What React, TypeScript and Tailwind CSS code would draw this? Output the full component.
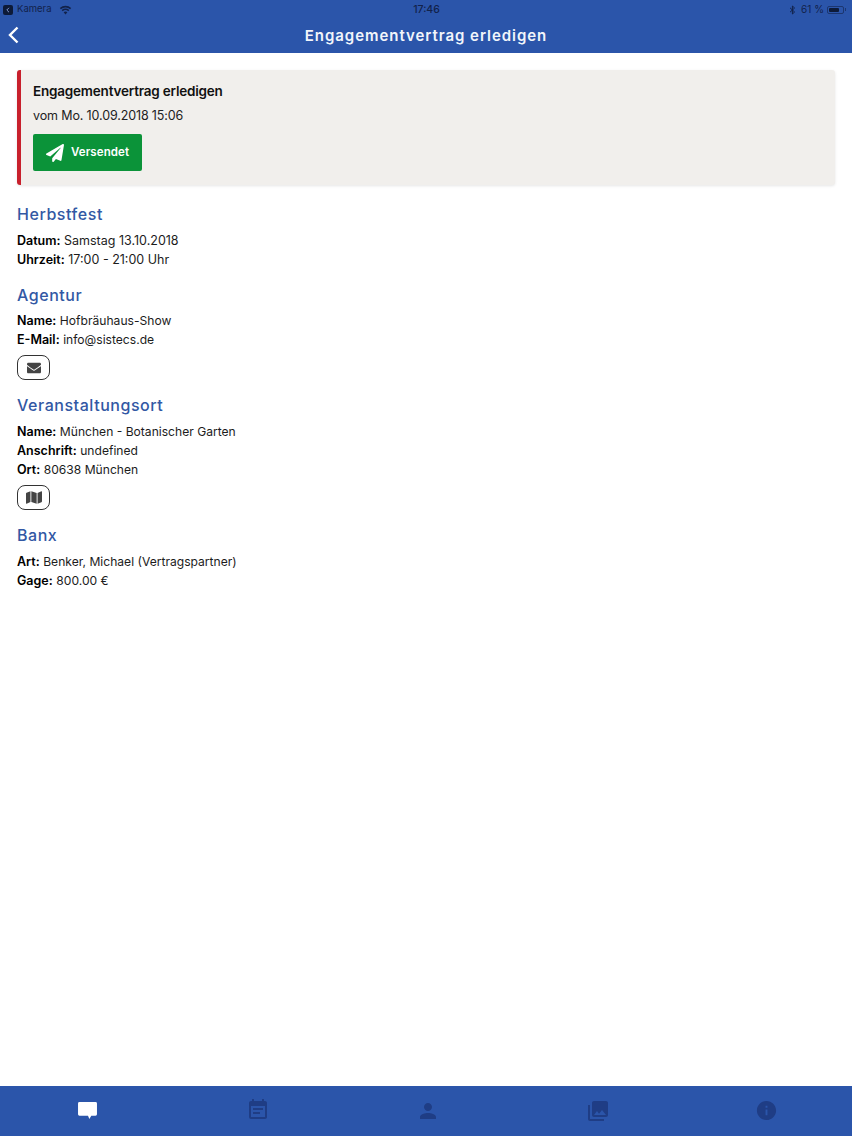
import React from 'react';
import { FaEnvelope, FaMap, FaPaperPlane } from 'react-icons/fa';
import { MdEventNote, MdInfo, MdPerson, MdPhotoLibrary } from 'react-icons/md';

const Row = ({ label, value, large }: { label: string; value: string; large?: boolean }) => (
  <p className="h-[19px] text-[12.5px] leading-[19px] text-[#1c1c1c]">
    <b className="font-semibold text-black">{label}</b>{' '}
    <span className={large ? 'text-[12.5px]' : 'text-[12.1px]'}>{value}</span>
  </p>
);

const SectionTitle = ({ children }: { children: React.ReactNode }) => (
  <h2 className="h-[24px] text-[16px] leading-[24px] font-medium tracking-[0.55px] text-[#3258a4]">{children}</h2>
);

const IconButton = ({ children }: { children: React.ReactNode }) => (
  <div className="mt-[6px] flex h-[25px] w-[33px] items-center justify-center rounded-[8px] border border-[#333] bg-white text-[#444]">
    {children}
  </div>
);

const App = () => {
  return (
    <div className="flex h-[1136px] w-[852px] flex-col overflow-hidden bg-white font-['Inter',sans-serif]">
      {/* Status bar + Titel */}
      <header className="h-[53px] shrink-0 bg-[#2b55aa]">
        <div className="flex h-[19px] items-center justify-between px-[3px] text-[9.5px] text-[#12224a]">
          <div className="flex flex-1 items-center gap-[4px]">
            <span className="flex h-[10px] w-[10px] items-center justify-center rounded-[2px] bg-[#0d1a38]">
              <svg width="6" height="6" viewBox="0 0 6 6" fill="none" stroke="#7d93c8" strokeWidth="1">
                <path d="M4 0.8 L1.8 3 L4 5.2" />
              </svg>
            </span>
            <span>Kamera</span>
            <svg className="ml-[3px]" width="13" height="10" viewBox="0 0 13 10" fill="#12224a">
              <path d="M6.5 9.5 L4.6 7.3 A3 3 0 0 1 8.4 7.3 Z" />
              <path d="M3.7 6.2 L2.7 5.1 A5.6 5.6 0 0 1 10.3 5.1 L9.3 6.2 A4.2 4.2 0 0 0 3.7 6.2 Z" />
              <path d="M1.9 4.2 L0.8 3 A8.3 8.3 0 0 1 12.2 3 L11.1 4.2 A6.8 6.8 0 0 0 1.9 4.2 Z" />
            </svg>
          </div>
          <span className="ml-[4px] text-[10.5px] font-medium">17:46</span>
          <div className="flex flex-1 items-center justify-end gap-[3px] pr-[3px]">
            <svg width="7" height="10" viewBox="0 0 7 10" fill="none" stroke="#12224a" strokeWidth="1">
              <path d="M1 2.8 L5.6 7 L3.4 9 V1 L5.6 3 L1 7.2" />
            </svg>
            <span className="ml-[2px] text-[10px]">61 %</span>
            <span className="flex h-[8px] w-[17px] rounded-[2px] border border-[#12224a]/60 p-px">
              <span className="w-[10px] rounded-[1px] bg-[#0d1a38]" />
            </span>
            <span className="-ml-[2px] h-[3px] w-px bg-[#12224a]/60" />
          </div>
        </div>
        <div className="relative flex h-[34px] items-center justify-center">
          <svg className="absolute left-[8px] top-[7px]" width="11" height="18" viewBox="0 0 11 18" fill="none" stroke="white" strokeWidth="2.4">
            <path d="M9.5 1.5 L2 9 L9.5 16.5" />
          </svg>
          <h1 className="text-[15px] font-semibold tracking-[0.95px] text-[#f2f5fb]">Engagementvertrag erledigen</h1>
        </div>
      </header>

      <main className="flex-1 px-[17px] pt-[17px]">
        {/* Status-Karte */}
        <div className="h-[115px] w-[818px] rounded-[3px] border-l-[4px] border-l-[#c8202c] bg-[#f1efec] pt-[12px] pl-[12px] shadow-[0_1px_3px_rgba(0,0,0,0.1)]">
          <h3 className="h-[18px] text-[13.5px] leading-[18px] font-semibold tracking-[-0.2px] text-[#111]">Engagementvertrag erledigen</h3>
          <p className="mt-[7px] h-[18px] text-[12.5px] leading-[18px] tracking-[-0.13px] text-[#222]">vom Mo. 10.09.2018 15:06</p>
          <div className="mt-[9px] flex h-[37px] w-[109px] items-center gap-[7px] rounded-[2px] bg-[#0b9339] pl-[13px] text-white">
            <FaPaperPlane className="h-[18px] w-[18px]" />
            <span className="text-[11.5px] font-semibold tracking-[0.1px]">Versendet</span>
          </div>
        </div>

        <section className="mt-[17px]">
          <SectionTitle>Herbstfest</SectionTitle>
          <div className="mt-[5px]">
            <Row large label="Datum:" value="Samstag 13.10.2018" />
            <Row large label="Uhrzeit:" value="17:00 - 21:00 Uhr" />
          </div>
        </section>

        <section className="mt-[14px]">
          <SectionTitle>Agentur</SectionTitle>
          <div className="mt-[4px]">
            <Row label="Name:" value="Hofbräuhaus-Show" />
            <Row label="E-Mail:" value="info@sistecs.de" />
          </div>
          <IconButton>
            <FaEnvelope className="h-[14px] w-[16px]" />
          </IconButton>
        </section>

        <section className="mt-[13px]">
          <SectionTitle>Veranstaltungsort</SectionTitle>
          <div className="mt-[5px]">
            <Row label="Name:" value="München - Botanischer Garten" />
            <Row label="Anschrift:" value="undefined" />
            <Row label="Ort:" value="80638 München" />
          </div>
          <IconButton>
            <FaMap className="h-[15px] w-[16px]" />
          </IconButton>
        </section>

        <section className="mt-[13px]">
          <SectionTitle>Banx</SectionTitle>
          <div className="mt-[5px]">
            <Row label="Art:" value="Benker, Michael (Vertragspartner)" />
            <Row label="Gage:" value="800.00 €" />
          </div>
        </section>
      </main>

      {/* Tabs */}
      <nav className="grid h-[50px] shrink-0 grid-cols-5 bg-[#2b55aa] pl-[3px] text-[#1f3d85]">
        <div className="flex justify-center pt-[16px] pr-[1px]">
          <svg width="19" height="18" viewBox="0 0 20 19" fill="white">
            <path d="M1.5 0 H18.5 A1.5 1.5 0 0 1 20 1.5 V13 A1.5 1.5 0 0 1 18.5 14.5 H14 L12 18 L10.5 14.5 H1.5 A1.5 1.5 0 0 1 0 13 V1.5 A1.5 1.5 0 0 1 1.5 0 Z" />
          </svg>
        </div>
        <div className="flex justify-center pt-[12px]">
          <MdEventNote className="h-[24px] w-[24px]" />
        </div>
        <div className="flex justify-center pt-[13px] pl-[1px]">
          <MdPerson className="h-[24px] w-[24px]" />
        </div>
        <div className="flex justify-center pt-[13px] pl-[1px]">
          <MdPhotoLibrary className="h-[24px] w-[24px]" />
        </div>
        <div className="flex justify-center pt-[13px] pr-[2px]">
          <MdInfo className="h-[23px] w-[23px]" />
        </div>
      </nav>
    </div>
  );
};

export default App;
